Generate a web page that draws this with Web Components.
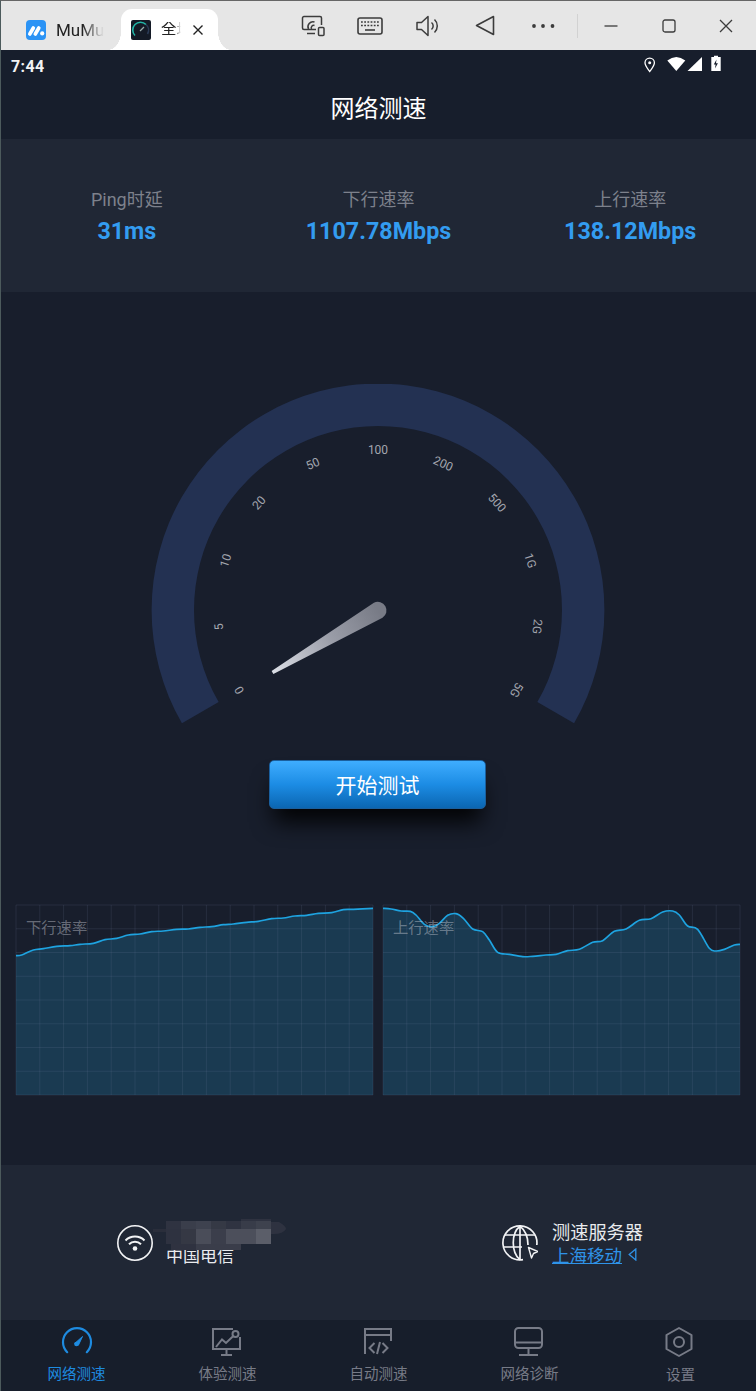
<!DOCTYPE html>
<html lang="zh">
<head>
<meta charset="utf-8">
<title>网络测速</title>
<style>
html,body{margin:0;padding:0;background:#181e2c}
body{font-family:Roboto,"Noto Sans CJK SC",sans-serif;width:756px;height:1391px;overflow:hidden}
</style>
</head>
<body>
<app-window>
  <title-bar></title-bar>
  <status-bar></status-bar>
  <page-header>网络测速</page-header>
  <stat-band>
    <stat-item label="Ping时延" value="31ms"></stat-item>
    <stat-item label="下行速率" value="1107.78Mbps"></stat-item>
    <stat-item label="上行速率" value="138.12Mbps"></stat-item>
  </stat-band>
  <speed-gauge></speed-gauge>
  <start-button>开始测试</start-button>
  <chart-row>
    <rate-chart label="下行速率" x0="48" points="48,197 65,195 100,180 130,176 170,169 210,167 240,163 280,160 315,149 350,145 385,135 420,132 455,125 490,123 530,118 565,117 600,112 635,110 670,104 700,102 740,97 775,94 815,86 850,84 885,78 920,76 955,70 995,68 1030,59 1060,58 1119,55"></rate-chart>
    <rate-chart label="上行速率" x0="21" points="21,55 45,57 75,63 103,64 120,75 145,103 170,110 190,100 215,76 240,71 262,85 290,117 320,125 340,150 365,187 400,193 440,200 470,199 510,195 540,193 575,182 610,178 650,157 680,152 715,124 750,117 790,91 825,86 860,66 890,63 910,75 935,108 965,118 1000,175 1020,183 1045,178 1075,165 1092,163"></rate-chart>
  </chart-row>
  <info-band></info-band>
  <bottom-nav>
    <nav-item active label="网络测速">
      <svg viewBox="0 0 32 32" width="32" height="32" fill="none" stroke="currentColor" stroke-width="2.2"><path d="M6.200 26.200A14 14 0 1 1 25.800 26.200" stroke-linecap="round"/><path d="M13.600 17.600 21.500 10.500 17.400 19.200Z" fill="currentColor" stroke-width="1" stroke-linejoin="round"/><circle cx="15.400" cy="18" r="2.200" fill="currentColor" stroke="none"/></svg>
    </nav-item>
    <nav-item label="体验测速">
      <svg viewBox="0 0 32 32" width="32" height="32" fill="none" stroke="currentColor" stroke-width="2" style="transform:translateX(-1px)"><path d="M22 3H2V23H29V11"/><circle cx="24.500" cy="8" r="3"/><path d="M5 21 11 13.500 15 17 22.300 10"/><path d="M15.500 23V28M10 29H21"/></svg>
    </nav-item>
    <nav-item label="自动测速">
      <svg viewBox="0 0 32 32" width="32" height="32" fill="none" stroke="currentColor" stroke-width="2" style="transform:translateX(-1px)"><path d="M3 28V3H29V15M3 9H29"/><path d="M12.500 17 7.500 22 12.500 27M15 28 18 16M20.500 17 25.500 22 20.500 27"/></svg>
    </nav-item>
    <nav-item label="网络诊断">
      <svg viewBox="0 0 32 32" width="32" height="32" fill="none" stroke="currentColor" stroke-width="2" style="transform:translateX(-1px)"><rect x="2" y="2" width="27" height="20" rx="3.500"/><path d="M2 16.500H29M15.500 22V28M6 29H25"/></svg>
    </nav-item>
    <nav-item label="设置" low>
      <svg viewBox="0 0 32 32" width="32" height="32" fill="none" stroke="currentColor" stroke-width="2" style="transform:translateX(-2px)"><path d="M16 2 28.500 9V23L16 30 3.500 23V9Z" stroke-linejoin="round"/><circle cx="16" cy="16" r="5"/></svg>
    </nav-item>
  </bottom-nav>
</app-window>

<script>
function def(name, css, html, init){
  customElements.define(name, class extends HTMLElement{
    connectedCallback(){
      if(this.shadowRoot) return;
      const r=this.attachShadow({mode:'open'});
      r.innerHTML='<style>'+css+'</style>'+(typeof html==='function'?html(this):html);
      if(init) init(this,r);
    }
  });
}

def('app-window',`:host{display:flex;flex-direction:column;width:756px;height:1391px;box-sizing:border-box;border-left:1px solid #4c5a5c;border-top:1px solid #666;background:#181e2c;color:#fff}`,`<slot></slot>`);

def('title-bar',`
:host{display:flex;height:49px;background:#e6e6e6;color:#333;align-items:stretch;flex:none}
.tab{display:flex;align-items:center;position:relative;font:17px/1 Roboto,"Noto Sans CJK SC",sans-serif;color:#222;padding-top:9px;box-sizing:border-box}
.t1{width:107px;padding-left:25px}
.t2{width:97px;margin-left:13px;padding-left:10px;margin-top:8px;padding-top:0;background:#fff;border-radius:11px 11px 0 0}
.t2::before,.t2::after{content:"";position:absolute;bottom:0;width:13px;height:18px}
.t2::before{left:-13px;background:radial-gradient(ellipse 13px 18px at 0 0,transparent 98%,#fff 100%)}
.t2::after{right:-13px;background:radial-gradient(ellipse 13px 18px at 100% 0,transparent 98%,#fff 100%)}
.lab{display:block;white-space:nowrap;margin-left:10px}
.t1 .lab{-webkit-mask-image:linear-gradient(90deg,#000 55%,transparent)}
.t2 .lab{font-size:15.500px;width:31px;margin-right:-11px;-webkit-mask-image:linear-gradient(90deg,#000 13px,transparent 20px)}
.x{margin-left:11px;display:block}
.tools{display:flex;margin-left:66px}
.b{width:57.500px;display:flex;align-items:center;justify-content:center}
.div{width:1px;height:24px;background:#d2d2d2;align-self:center;margin:0 5px 0 5px}
svg{display:block}
`,`
<div class="tab t1">
  <svg width="20" height="20" viewBox="0 0 20 20"><rect width="20" height="20" rx="4" fill="#2b93f5"/><path d="M3.800 14 7.300 8M9.300 14 12.800 8" stroke="#fff" stroke-width="3.600" stroke-linecap="round"/><circle cx="16.200" cy="13.400" r="2.100" fill="#fff"/></svg>
  <span class="lab">MuMu</span>
</div>
<div class="tab t2">
  <svg width="20" height="20" viewBox="0 0 20 20"><rect width="20" height="20" rx="2" fill="#141a26"/><path d="M4 15.500A7.500 7.500 0 0 1 15 4.500" fill="none" stroke="#22b6a8" stroke-width="1.600"/><path d="M15 4.500A7.500 7.500 0 0 1 16.500 14" fill="none" stroke="#2a3a55" stroke-width="1.600"/><path d="M9 11 13 7" stroke="#9aa" stroke-width="1.200"/></svg>
  <span class="lab">全球</span>
  <svg class="x" width="12" height="12" viewBox="0 0 12 12"><path d="M1.500 1.500 10.500 10.500M10.500 1.500 1.500 10.500" stroke="#222" stroke-width="1.400"/></svg>
</div>
<div class="tools">
  <div class="b"><svg width="24" height="22" viewBox="0 0 24 22" fill="none" stroke="#3c3c3c" stroke-width="1.500"><path d="M15 14.500H3A1.500 1.500 0 0 1 1.500 13V3A1.500 1.500 0 0 1 3 1.500H19A1.500 1.500 0 0 1 20.500 3V10"/><path d="M6 18.500H14"/><path d="M7.500 14A5 5 0 0 1 13.500 7M10.500 14A2.500 2.500 0 0 1 13.500 10.500"/><rect x="17.500" y="12.500" width="5.500" height="8" rx="1"/></svg></div>
  <div class="b"><svg width="26" height="18" viewBox="0 0 26 18" fill="none" stroke="#3c3c3c" stroke-width="1.600"><rect x="1" y="1" width="24" height="16" rx="2"/><path d="M4 5H22M4 8.500H22" stroke-dasharray="1.800 1.400"/><path d="M8 13H18"/></svg></div>
  <div class="b"><svg width="24" height="22" viewBox="0 0 24 22" fill="none" stroke="#3c3c3c" stroke-width="1.500" stroke-linejoin="round"><path d="M1 7.500H5.500L12 1.500V20.500L5.500 14.500H1Z"/><path d="M15.500 7.500A4.500 4.500 0 0 1 15.500 14.500M18.500 4.500A9 9 0 0 1 18.500 17.500"/></svg></div>
  <div class="b"><svg width="20" height="21" viewBox="0 0 20 21" fill="none" stroke="#3c3c3c" stroke-width="1.600" stroke-linejoin="round"><path d="M18.500 1.500V19.500L1.500 10.500Z"/></svg></div>
  <div class="b"><svg width="24" height="6" viewBox="0 0 24 6" fill="#3c3c3c"><circle cx="3" cy="3" r="1.900"/><circle cx="12" cy="3" r="1.900"/><circle cx="21.500" cy="3" r="1.900"/></svg></div>
</div>
<div class="div"></div>
<div class="b"><svg width="14" height="2" viewBox="0 0 14 2"><path d="M0.500 1H13.500" stroke="#3c3c3c" stroke-width="1.300"/></svg></div>
<div class="b"><svg width="14" height="14" viewBox="0 0 14 14"><rect x="1" y="1" width="12" height="12" rx="2" fill="none" stroke="#3c3c3c" stroke-width="1.300"/></svg></div>
<div class="b"><svg width="14" height="14" viewBox="0 0 14 14"><path d="M1 1 13 13M13 1 1 13" stroke="#3c3c3c" stroke-width="1.300"/></svg></div>
`);

def('status-bar',`
:host{display:flex;height:32px;flex:none;align-items:center;justify-content:space-between;padding:0 34px 0 10px;background:#171e2c;font:700 16px/1 Roboto,sans-serif;color:#f2f3f5}
svg{display:block}
span{position:relative;top:1px;letter-spacing:.4px}
`,`<span>7:44</span>
<svg width="78" height="20" viewBox="644 54 78 20" style="margin-top:-5px">
  <path d="M649.700 71.500C647.500 68.500 645 65.800 645 62.800A4.700 4.700 0 0 1 654.400 62.800C654.400 65.800 651.900 68.500 649.700 71.500Z" fill="none" stroke="#fff" stroke-width="1.300"/><circle cx="649.700" cy="62.700" r="1.500" fill="#fff"/>
  <path d="M667.300 60.600Q676.300 53.200 685.300 60.600L676.300 71Z" fill="#fff"/>
  <path d="M702 57V71H687.500Z" fill="#fff"/>
  <path d="M714 57V55.800H718V57H720.700V71H711.300V57Z" fill="#fff"/><path d="M716.500 59.500 713.800 64.500H715.600L715 68.500 717.900 63.200H716Z" fill="#171e2c"/>
</svg>`);

def('page-header',`:host{display:flex;height:57px;flex:none;align-items:center;justify-content:center;font:24px/1 "Noto Sans CJK SC",sans-serif;color:#fff;background:#171e2c;padding-bottom:7px;box-sizing:border-box}`,`<slot></slot>`);

def('stat-band',`:host{display:grid;grid-template-columns:repeat(3,1fr);height:153px;flex:none;background:#202735;align-items:center;padding-top:1px;box-sizing:border-box}`,`<slot></slot>`);

def('stat-item',`
:host{display:flex;flex-direction:column;align-items:center;gap:6px}
.l{font:18px/24px Roboto,"Noto Sans CJK SC",sans-serif;color:#7d818c}
.v{font:700 23.300px/27px Roboto,sans-serif;color:#339cf0}
`,h=>`<div class="l">${h.getAttribute('label')}</div><div class="v">${h.getAttribute('value')}</div>`);

def('speed-gauge',`:host{display:block;height:340px;flex:none;margin-top:92px}svg{display:block;margin-left:-1px}text{font:12px Roboto,sans-serif;fill:#a3a6af}`,
()=>{
  const cx=378,cy=226,ro=226.4,ri=184;
  const a=d=>{const r=d*Math.PI/180;return [Math.sin(r),-Math.cos(r)]};
  const pt=(r,d)=>{const v=a(d);return (cx+r*v[0]).toFixed(2)+' '+(cy+r*v[1]).toFixed(2)};
  const labels=['0','5','10','20','50','100','200','500','1G','2G','5G'];
  let t='';
  labels.forEach((s,i)=>{
    const d=-120+24*i; const v=a(d); const x=cx+160*v[0], y=cy+160*v[1];
    t+=`<text x="${x.toFixed(1)}" y="${y.toFixed(1)}" text-anchor="middle" dominant-baseline="central" transform="rotate(${d} ${x.toFixed(1)} ${y.toFixed(1)})">${s}</text>`;
  });
  return `<svg width="756" height="340" viewBox="0 0 756 340">
  <defs><linearGradient id="n" gradientUnits="userSpaceOnUse" x1="272" y1="288" x2="378" y2="226"><stop offset="0" stop-color="#dcdfe6"/><stop offset=".55" stop-color="#9a9da8"/><stop offset="1" stop-color="#787b86"/></linearGradient></defs>
  <path d="M${pt(ro,-120)}A${ro} ${ro} 0 1 1 ${pt(ro,120)}L${pt(ri,120)}A${ri} ${ri} 0 1 0 ${pt(ri,-120)}Z" fill="#233152"/>
  ${t}
  <path d="M273.400 290 271.600 286.900 373.900 218.700A8.700 8.700 0 0 1 382.500 233.800Z" fill="url(#n)"/>
  </svg>`;
});

def('start-button',`
:host{display:flex;align-self:flex-start;margin:36px 0 0 268px;width:217px;height:49px;box-sizing:border-box;flex:none;align-items:center;justify-content:center;border-radius:5px;border:1px solid #1a5f9e;background:linear-gradient(#3fadff,#1c8ce4 50%,#0b66b2);font:21px/1 "Noto Sans CJK SC",sans-serif;color:#fff;box-shadow:0 18px 22px -5px rgba(0,0,0,.9)}
`,`<slot></slot>`);

def('chart-row',`:host{display:flex;gap:10px;margin:96px 0 0 15px;flex:none}`,`<slot></slot>`);

def('rate-chart',`
:host{display:block;position:relative;width:357px;height:190px}
svg{display:block;overflow:visible}
.lab{position:absolute;left:10px;top:12px;font:15.300px/18px "Noto Sans CJK SC",sans-serif;color:rgba(200,203,212,.45)}
`,h=>{
  const x0=+h.getAttribute('x0');
  const p=h.getAttribute('points').trim().split(/\s+/).map(s=>s.split(',').map(Number));
  let d='M'+p[0][0]+' '+p[0][1];
  for(let i=0;i<p.length-1;i++){
    const a=p[Math.max(i-1,0)],b=p[i],c=p[i+1],e=p[Math.min(i+2,p.length-1)];
    const c1=[b[0]+(c[0]-a[0])/6,b[1]+(c[1]-a[1])/6],c2=[c[0]-(e[0]-b[0])/6,c[1]-(e[1]-b[1])/6];
    d+=`C${c1[0].toFixed(1)} ${c1[1].toFixed(1)} ${c2[0].toFixed(1)} ${c2[1].toFixed(1)} ${c[0]} ${c[1]}`;
  }
  const last=p[p.length-1][0];
  let g='';
  for(let i=0;i<=15;i++){const x=x0+i*71.4;g+=`M${x.toFixed(1)} 45V615`}
  for(let i=0;i<=8;i++){const y=45+i*71.25;g+=`M${x0} ${y.toFixed(1)}H${x0+1071}`}
  return `<svg width="357" height="190" viewBox="${x0} 45 1071 570">
  <path d="${d}L${last} 615L${p[0][0]} 615Z" fill="#1a3a51"/>
  <path d="${g}" stroke="rgba(120,130,160,.16)" stroke-width="3" fill="none"/>
  <path d="${d}" stroke="#1ea3e0" stroke-width="5" fill="none"/>
  </svg><div class="lab">${h.getAttribute('label')}</div>`;
});

def('info-band',`
:host{display:grid;grid-template-columns:377px 378px;height:155px;flex:none;margin:70px 0 0 0;background:#202735;align-items:center}
.item{display:flex;align-items:center;position:relative}
.a{padding-left:116px;gap:13px}
.b{padding-left:124px;gap:14px}
.txt{font:17.500px/24px "Noto Sans CJK SC",sans-serif;color:#e9ebee}
.a .txt{font-size:17px}
.ttl{font-size:18.200px}
.sp{height:24px}
.lnk{color:#2f93e8;display:flex;align-items:center;gap:6px}
.lnk span{text-decoration:underline}
.mos{position:absolute;left:152px;top:-2px}
svg{display:block}
`,`
<div class="item a">
  <svg width="36" height="36" viewBox="0 0 36 36" fill="none" stroke="#f2f3f5" stroke-width="1.600"><circle cx="18" cy="18" r="17.200"/><path d="M8.500 15.500A13.500 13.500 0 0 1 27.500 15.500M12 19.300A8.500 8.500 0 0 1 24 19.300" stroke-width="2"/><circle cx="18" cy="23.500" r="2.300" fill="#f2f3f5" stroke="none"/></svg>
  <div class="txt"><div class="sp"></div><div>中国电信</div></div>
  <svg class="mos" width="134" height="36" viewBox="152 1218 134 36">
    <path d="M152 1230H166V1233H152Z" fill="#2a2e3b"/>
    <path d="M240 1220H270V1222H240Z" fill="#2e3240"/>
    <g shape-rendering="crispEdges">
    <rect x="165" y="1222" width="15" height="8" fill="#2f3341"/><rect x="180" y="1222" width="15" height="8" fill="#3a3e4b"/><rect x="195" y="1222" width="15" height="8" fill="#3e424f"/><rect x="210" y="1222" width="15" height="8" fill="#353945"/><rect x="225" y="1222" width="15" height="8" fill="#2f3341"/><rect x="240" y="1222" width="15" height="8" fill="#383c49"/><rect x="255" y="1222" width="15" height="8" fill="#3e424e"/>
    <rect x="165" y="1230" width="15" height="15" fill="#2e3240"/><rect x="180" y="1230" width="15" height="15" fill="#353844"/><rect x="195" y="1230" width="15" height="15" fill="#4a4d59"/><rect x="210" y="1230" width="15" height="15" fill="#3b3e4b"/><rect x="225" y="1230" width="15" height="15" fill="#4c4f5b"/><rect x="240" y="1230" width="15" height="15" fill="#4c4f5b"/><rect x="255" y="1230" width="15" height="15" fill="#5b5e69"/>
    <rect x="170" y="1245" width="25" height="6" fill="#2f3240"/><rect x="195" y="1245" width="45" height="6" fill="#3a3d4a"/>
    </g>
    <path d="M270 1223H278Q285 1227 285 1230Q282 1235 273 1235H270Z" fill="#2e3240"/>
  </svg>
</div>
<div class="item b">
  <svg width="36" height="36" viewBox="0 0 36 36" fill="none" stroke="#f2f3f5" stroke-width="1.700"><path d="M21 34.600A17 17 0 1 1 34.800 20"/><path d="M18 1.200C9 8 9 27 18 34.800M18 1.200C24 6 26 13 26 20M18 1.200V34.800M3 10H33M1.200 22H20"/><path d="M26.500 22.500 36 26.500 31.500 28.500 29.500 33Z" stroke-linejoin="round" stroke-width="1.400"/></svg>
  <div class="txt"><div class="ttl">测速服务器</div><div class="lnk"><span>上海移动</span><svg width="9" height="13" viewBox="0 0 9 13"><path d="M7.800 1 1.200 6.500 7.800 12Z" fill="none" stroke="#2f93e8" stroke-width="1.300"/></svg></div></div>
</div>`);

def('bottom-nav',`:host{display:grid;grid-template-columns:repeat(5,151px);flex:1;background:#171e2b}`,`<slot></slot>`);

def('nav-item',`
:host{display:flex;flex-direction:column;align-items:center;color:#777b87;padding-top:6px;box-sizing:border-box}
:host([active]){color:#1e8be0}
.i{height:32px}
.l{font:14.500px/20px "Noto Sans CJK SC",sans-serif;margin-top:5px}
:host([low]) .l{margin-top:6px}
::slotted(svg){display:block}
`,h=>`<div class="i"><slot></slot></div><div class="l">${h.getAttribute('label')}</div>`);
</script>
</body>
</html>
